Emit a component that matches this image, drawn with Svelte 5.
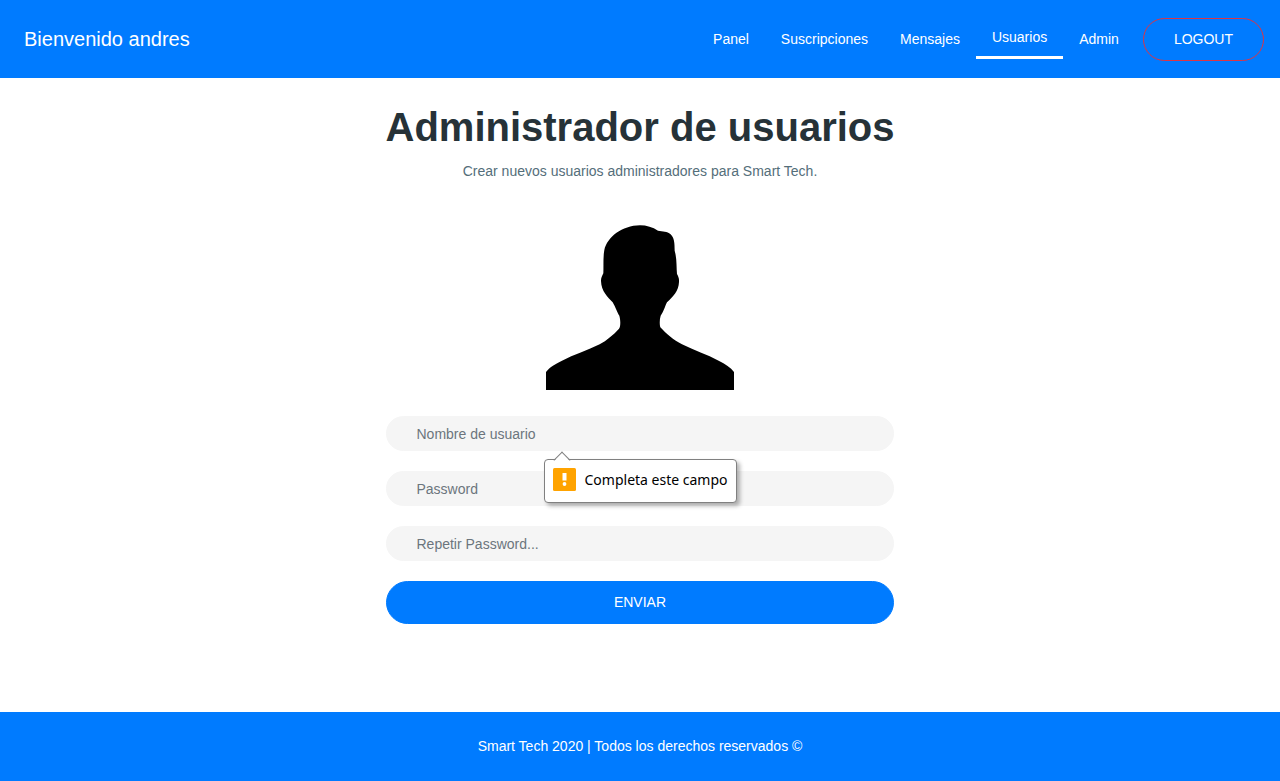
<script>
  const links = ['Panel', 'Suscripciones', 'Mensajes', 'Usuarios', 'Admin'];
  const active = 'Usuarios';

  let username = $state('');
  let password = $state('');
  let repeated = $state('');
  let showHint = $derived(username === '');

  function submit(event) {
    event.preventDefault();
  }
</script>

<div class="page">
  <header>
    <span class="brand">Bienvenido andres</span>
    <nav>
      {#each links as link}
        <a href="#{link.toLowerCase()}" class:active={link === active}>{link}</a>
      {/each}
      <button type="button" class="logout">LOGOUT</button>
    </nav>
  </header>

  <main>
    <section>
      <h1>Administrador de usuarios</h1>
      <p class="lead">Crear nuevos usuarios administradores para Smart Tech.</p>

      <svg class="avatar" viewBox="48 45 564 495" aria-hidden="true">
        <path
          d="M48 540V486C60 470 76 462 96 452C132 434 172 421 209 403C230 391 251 374 267 356C272 351 272 330 268 317C262 309 257 292 248 277C233 261 214 244 213 213C213 204 216 198 220 190C221 165 219 141 223 120C232 81 276 47 330 46C350 46 368 52 384 62C398 65 412 64 421 72C433 83 434 99 434 122C441 145 439 172 441 192C445 200 448 205 447 216C446 244 429 260 411 277C405 289 400 308 392 317C388 330 389 345 391 352C408 370 431 391 456 403C493 421 531 434 566 452C586 462 602 472 612 486V540Z"
        />
      </svg>

      <form onsubmit={submit} novalidate>
        <div class="field">
          <input type="text" placeholder="Nombre de usuario" aria-label="Nombre de usuario" bind:value={username} />
          {#if showHint}
            <div class="hint" role="alert">
              <svg class="warning" viewBox="0 0 23 23" aria-hidden="true">
                <rect width="23" height="23" rx="1.5" fill="#ffa300" />
                <rect x="9.5" y="5" width="4" height="7.5" fill="#fff" />
                <circle cx="11.5" cy="16" r="1.9" fill="#fff" />
              </svg>
              <span>Completa este campo</span>
            </div>
          {/if}
        </div>
        <input type="password" placeholder="Password" aria-label="Password" bind:value={password} />
        <input type="password" placeholder="Repetir Password..." aria-label="Repetir Password" bind:value={repeated} />
        <button type="submit" class="send">ENVIAR</button>
      </form>
    </section>
  </main>

  <footer>Smart Tech 2020 | Todos los derechos reservados ©</footer>
</div>

<style>
  :global(body) {
    margin: 0;
    background: #fff;
  }

  .page {
    display: flex;
    flex-direction: column;
    min-height: 100vh;
    font: 14px/21px 'Liberation Sans', Arial, sans-serif;
    color: #263238;
  }

  header {
    display: flex;
    align-items: center;
    justify-content: space-between;
    box-sizing: border-box;
    min-height: 78px;
    padding: 16px 16px 16px 24px;
    background: #007bff;
    color: #fff;
  }

  .brand {
    font-size: 20px;
    line-height: 30px;
  }

  nav {
    display: flex;
    align-items: center;
  }

  nav a {
    padding: 8px 16px;
    color: #fff;
    text-decoration: none;
  }

  nav a.active {
    border-bottom: 3px solid #fff;
  }

  button {
    padding: 10px 30px;
    border: 1px solid #007bff;
    border-radius: 24px;
    background: #007bff;
    color: #fff;
    font: inherit;
    cursor: pointer;
  }

  .logout {
    margin-left: 8px;
    border-color: #dc3545;
  }

  main {
    flex: 1;
    display: flex;
    justify-content: center;
    align-items: flex-start;
    padding: 24px 16px;
  }

  section {
    display: flex;
    flex-direction: column;
    align-items: center;
  }

  h1 {
    margin: 0;
    font-size: 40px;
    line-height: 50px;
    font-weight: 700;
    text-align: center;
  }

  .lead {
    margin: 9px 0 0;
    color: #546e7a;
    text-align: center;
  }

  .avatar {
    width: 188px;
    margin: 43px 0 26px;
    fill: #000;
  }

  form {
    display: flex;
    flex-direction: column;
    gap: 20px;
    width: 100%;
  }

  .field {
    position: relative;
    display: flex;
  }

  input {
    box-sizing: border-box;
    width: 100%;
    height: 35px;
    padding: 0 30px;
    border: 1px solid #f5f5f5;
    border-radius: 18px;
    background: #f5f5f5;
    color: #263238;
    font: inherit;
    outline: none;
  }

  input::placeholder {
    color: #6c757d;
    opacity: 1;
  }

  .hint {
    position: absolute;
    z-index: 1;
    top: 43px;
    left: 158px;
    display: flex;
    align-items: flex-start;
    gap: 9px;
    padding: 8px 8px 10px;
    border: 1px solid #808080;
    border-radius: 4px;
    background: #fff;
    box-shadow: 3px 3px 4px rgba(0, 0, 0, 0.3);
    color: #000;
    font-family: 'Noto Sans', sans-serif;
    line-height: 24px;
    white-space: nowrap;
  }

  .hint::before {
    content: '';
    position: absolute;
    top: -6px;
    left: 11px;
    box-sizing: border-box;
    width: 12px;
    height: 12px;
    border: 1px solid #808080;
    border-width: 1px 0 0 1px;
    background: linear-gradient(135deg, #fff 50%, transparent 50%);
    transform: rotate(45deg);
  }

  .warning {
    width: 23px;
    height: 23px;
  }

  footer {
    padding: 24px 16px;
    background: #007bff;
    color: #fff;
    text-align: center;
  }
</style>
